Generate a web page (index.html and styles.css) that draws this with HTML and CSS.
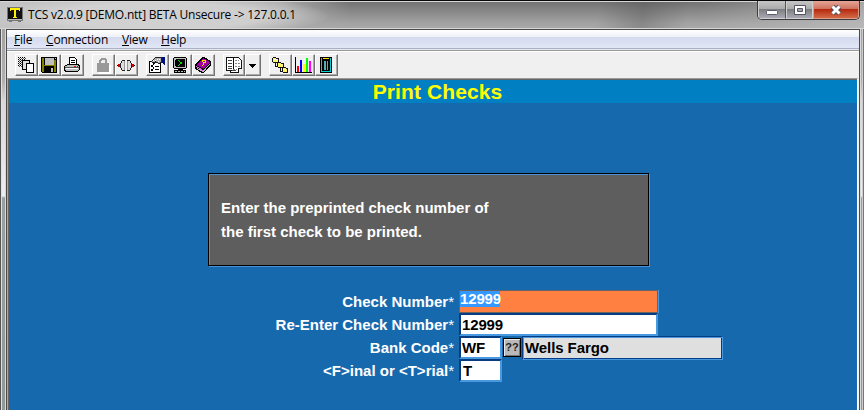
FILE: index.html
```html
<!DOCTYPE html>
<html lang="en">
<head>
<meta charset="utf-8">
<title>TCS v2.0.9</title>
<link rel="stylesheet" href="styles.css">
</head>
<body>
<div class="window">
  <header class="titlebar">
    <svg class="app-icon" width="16" height="16" viewBox="0 0 16 16" shape-rendering="crispEdges"><path fill="#777" d="M0 0h16v14H0zM2 14h3v1H2zM11 14h3v1h-3z"/><path fill="#111" d="M1 1h14v11H1z"/><path fill="#bbb" d="M1 12h14v1H1z"/><path fill="#ffef00" d="M3 1h10v3h-1V3H9v7h1v1H6v-1h1V3H4v1H3z"/></svg>
    <span class="caption">TCS v2.0.9 [DEMO.ntt] BETA Unsecure -&gt; 127.0.0.1</span>
    <div class="controls">
      <span class="ctl min"><svg width="14" height="12"><rect x="1.5" y="6.5" width="11" height="4" rx="1" fill="#fff" stroke="#5c5c6c"/></svg></span>
      <span class="ctl max"><svg width="14" height="12"><path d="M1.5 1.5h11v9h-11z" fill="#fff" stroke="#555566"/><path d="M4.500 4.500h5v3h-5z" fill="#a5a3a8" stroke="#555566"/></svg></span>
      <span class="ctl close"><svg width="14" height="12"><path d="M3.500 2.500L10.500 9.500M10.500 2.500L3.500 9.500" stroke="#585060" stroke-width="5"/><path d="M3.500 2.500L10.500 9.500M10.500 2.500L3.500 9.500" stroke="#fff" stroke-width="3"/></svg></span>
    </div>
  </header>
  <div class="client">
    <nav class="menu">
      <span class="m-file"><u>F</u>ile</span>
      <span class="m-conn"><u>C</u>onnection</span>
      <span class="m-view"><u>V</u>iew</span>
      <span class="m-help"><u>H</u>elp</span>
    </nav>
    <div class="toolbar">
      <div class="group">
        <span class="tool"><svg viewBox="0 0 18 18"><path d="M1 1.500h8M1 3.500h8M1 5.500h4M1 7.500h4M1 9.500h4" stroke="#000" stroke-dasharray="1 1"/><path d="M2 2.500h8M2 4.500h3M2 6.500h3M2 8.500h3M2 10.500h3" stroke="#555" stroke-dasharray="1 1"/><path d="M5.500 4.500h7v9h-7z" fill="#ddd" stroke="#000"/><path d="M9.500 7.500h7v9h-7z" fill="#fff" stroke="#000"/></svg></span>
        <span class="tool"><svg viewBox="0 0 18 18"><path fill="#000" d="M1 1h16v16H2l-1-1z"/><path fill="#808000" d="M2 2h2v14H2zM14 4h2v12h-2zM4 9h10v1H4z"/><path fill="#c0c0c0" d="M5 2h9v7H5zM15 2h1v1h-1zM11 12h2v4h-2z"/></svg></span>
        <span class="tool"><svg viewBox="0 0 18 18"><path d="M6.500 8.500v-7h5l2 2v5" fill="#fff" stroke="#000"/><path d="M8 4.500h4M8 6.500h4" stroke="#000"/><path d="M4.500 8.500h11l1 2v3l-2 2h-12l-1-2v-3z" fill="#c0c0c0" stroke="#000"/><path d="M2 11.500h14" stroke="#555"/><path d="M3 12.500h12" stroke="#fff"/><path d="M11 10.500h2M14 10.500h1" stroke="#f00"/></svg></span>
      </div>
      <div class="group">
        <span class="tool"><svg viewBox="0 0 18 18"><path fill="#fff" d="M5 9h12v9H5z"/><path fill="#999" d="M3 7h2V4l2-2h4l2 2v3h2v9H3z"/><path fill="#eee" d="M7 7V5l1-1h2l1 1v2z"/></svg></span>
        <span class="tool"><svg viewBox="0 0 18 18"><path fill="#d00000" d="M1 8h3v3H1zM14 8h3v3h-3z"/><path fill="#000" d="M0 9h1v1H0zM17 9h1v1h-1z"/><path d="M3.500 7.500l2-3h2v10h-2l-2-3zM14.500 7.500l-2-3h-2v10h2l2-3z" fill="#ddd" stroke="#222"/><path d="M7.500 5v9M10.500 5v9" stroke="#999"/></svg></span>
      </div>
      <div class="group">
        <span class="tool"><svg viewBox="0 0 18 18"><path d="M1.500 5.500h11v11h-11z" fill="#fff" stroke="#000"/><path d="M3 9.500l1 1 2-3M3 13.500l1 1 2-3M7 10.500h4M7 13.500h4" fill="none" stroke="#000"/><path d="M3.500 5.500l4-4h6v5l-3 1-3-2-1 2z" fill="#b0b0b0" stroke="#222"/><path d="M5 4h3M9 3h3M10 5h2" stroke="#fff" stroke-dasharray="1 1"/><path fill="#001080" d="M14 1h3v8h-1l-2-2z"/></svg></span>
        <span class="tool"><svg viewBox="0 0 18 18"><path d="M2.500 2.500l1-1h11l1 1v9l-1 1h-11l-1-1z" fill="#c0c0c0" stroke="#000"/><path fill="#000" d="M5 3h8l1 1v6l-1 1H5l-1-1V4zM7 13h5v2H7zM3 14h12v3H3z"/><path d="M4 15.500h10" stroke="#bbb" stroke-dasharray="2 1"/><path d="M7.500 4.500l3 2.500-3 2.500" fill="none" stroke="#00e000"/></svg></span>
        <span class="tool"><svg viewBox="0 0 18 18"><path fill="#000" d="M8 1h2l7 4v4l-7 8H8L1 13V9z"/><path fill="#a000a0" d="M9 2l7 4-6 7-8-4z"/><path d="M2 10.500l7 4" stroke="#f060f0" fill="none"/><path d="M3 12.500l6 3L16 8" stroke="#bbb" fill="none"/><path d="M7.500 5.500h1v-1h3v2h-2v2M8 9.500h1" stroke="#ffe000" fill="none"/></svg></span>
      </div>
      <div class="group">
        <span class="tool docs"><svg viewBox="0 0 18 18"><path d="M1.500 1.500h7v13h-7zM8.500 1.500h5l3 3v8h-3v4h-8v-2" fill="#fff" stroke="#111"/><path d="M3 4.500h4M3 7.500h4M3 10.500h4M3 12.500h4M7 14.500h4" stroke="#444"/><path d="M10 4.500h4M10 7.500h5M10 10.500h5M8 13.500h4" stroke="#888" stroke-dasharray="2 1"/></svg></span>
        <span class="tool drop"><svg viewBox="0 0 18 18"><path fill="#000" d="M5 8h7v1H5zM6 9h5v1H6zM7 10h3v1H7zM8 11h1v1H8z"/></svg></span>
      </div>
      <div class="group">
        <span class="tool"><svg viewBox="0 0 18 18"><path d="M1.500 2.500l1-1h2l1 1h2v4h-5l-1-1zM6.500 7.500l1-1h2l1 1h2v4h-5l-1-1zM11.500 12.500l1-1h2l1 1h1v4h-4l-1-1z" fill="#fff36a" stroke="#111"/><path d="M4.500 7v3h2M9.500 12v3h2" stroke="#111" fill="none"/><path d="M3 3.500h4M8 8.500h4M12 13.500h4" stroke="#fff" stroke-dasharray="1 1"/></svg></span>
        <span class="tool"><svg viewBox="0 0 18 18"><path d="M1.500 1v15.500H18" stroke="#000" fill="none"/><path fill="red" d="M3 10h2v6H3z"/><path fill="#00f" d="M6 4h2v12H6z"/><path fill="#ff0" d="M9 8h2v8H9z"/><path fill="#0f0" d="M12 2h2v14h-2z"/><path fill="#f0f" d="M15 5h2v11h-2z"/></svg></span>
        <span class="tool"><svg viewBox="0 0 18 18"><path fill="#000" d="M3 1h12v16H3z"/><path fill="#00d0d8" d="M4 2h1v14H4zM13 2h1v14h-1zM5 15h8v1H5z"/><path fill="#50b0b4" d="M6 4h6v10H6z"/><path d="M6 2.500h6" stroke="#ffe000"/><path d="M6 4.500h5.500V14M6.500 5v9M9.500 5v9" stroke="#000" fill="none"/></svg></span>
      </div>
    </div>
    <main class="screen">
      <h1><span>Print Checks</span></h1>
      <section class="message"><div class="message-inner">Enter the preprinted check number of<br>the first check to be printed.</div></section>
      <form class="fields">
        <div class="row"><label>Check Number<i>*</i></label><div class="field active"><mark>12999</mark></div></div>
        <div class="row"><label>Re-Enter Check Number<i>*</i></label><div class="field wide">12999</div></div>
        <div class="row"><label>Bank Code<i>*</i></label><div class="field code">WF</div><button type="button">??</button><div class="bank">Wells Fargo</div></div>
        <div class="row"><label>&lt;F&gt;inal or &lt;T&gt;rial<i>*</i></label><div class="field code trial">T</div></div>
      </form>
    </main>
  </div>
</div>
</body>
</html>
```
FILE: styles.css
```css
* { box-sizing: border-box; }
body { margin: 0; width: 864px; height: 410px; overflow: hidden; background: #999; }
.window {
  width: 864px; height: 410px; display: flex; flex-direction: column;
  padding: 0 4px 0 7px; border-top: 1px solid #08080c;
  background:
    linear-gradient(90deg, #555 0 1px, #e0e0e0 1px 2px, transparent 2px 862px, #ccc 862px 863px, #777 863px),
    linear-gradient(#9a9a9a, #b0b0b0 80px, #d8d8d8 100px, #eee 195px, #999f9e 197px, #929896);
}
.titlebar {
  flex: none; height: 28px; display: flex; align-items: flex-start; margin: 0 -4px 0 -7px; padding-left: 7px;
  border-top: 1px solid #d8d8d8; border-bottom: 1px solid #d6d6d6;
  background:
    radial-gradient(ellipse 170px 22px at 160px 14px, rgba(215,215,215,.8) 60%, transparent),
    linear-gradient(100deg, transparent 590px, rgba(70,70,70,.3) 635px, transparent 680px),
    linear-gradient(90deg, #c4c4c4 0, #aaa 280px, transparent 350px, transparent 700px, rgba(190,190,190,.7) 864px),
    linear-gradient(#737373, #a2a2a2 80%, #a8a8a8);
}
.app-icon { margin-top: 5px; }
.caption { font: 12px/26px "Open Sans", sans-serif; letter-spacing: -.21px; color: #000; margin-left: 5px; white-space: nowrap; }
.controls { display: flex; margin: -1px 4px 0 auto; height: 19px; width: 103px; border: 1px solid #3c3c40; border-top: 0; border-radius: 0 0 5px 5px; overflow: hidden; }
.ctl { display: flex; justify-content: center; align-items: center; border: 1px solid #d0d0d0; border-top: 0; background: linear-gradient(#c6c6c6, #aaa 48%, #7e7e80 50%, #a9a9b5); }
.min { width: 28px; border-right-color: #555; }
.max { width: 27px; }
.close { width: 46px; border-color: #e19a8a; background: linear-gradient(#e4a596, #cf705c 48%, #b72a11 50%, #d16b45); }
.client { flex: 1; width: 853px; border: solid #4a4a4a; border-width: 1px 1px 0 0; box-shadow: -1px 0 #4a4a4a, -2px 0 #d8d8d8, 1px 0 #d8d8d8; background: #f0f0f0; }
.menu { display: flex; height: 20px; padding-left: 7px; background: linear-gradient(#fff 0, #eef1f8 7px, #d5dbee 7px, #e0e6f5 18px, #aab1c4 18px, #aab1c4 19px, #e6e9f0 19px); font: 12px/19px "Open Sans", sans-serif; letter-spacing: -.18px; color: #000; }
.menu u { text-underline-offset: 1px; }
.m-file { width: 32px; }
.m-conn { width: 76px; }
.m-view { width: 39px; }
.toolbar { display: flex; gap: 8px; height: 28px; padding: 3px 0 0 8px; border-top: 1px solid #999; box-shadow: inset 0 1px #fff; background: #f0f0f0; }
.group { display: flex; }
.tool { width: 23px; height: 22px; padding: 1px; border: 1px solid; border-color: #fff #747474 #747474 #fff; box-shadow: inset -1px -1px #aaa; }
.tool svg { display: block; width: 18px; height: 18px; shape-rendering: crispEdges; }
.docs { width: 22px; }
.drop { width: 16px; padding: 1px 0; }
.drop svg { margin-left: -2px; }
.screen { height: 332px; width: 851px; border: solid #aaa; border-width: 1px 1px 0 1px; border-top-color: #999; border-right-color: #fff; padding: 1px 0 0 1px; background: linear-gradient(#666, #666) 0 0 / 100% 1px no-repeat, linear-gradient(#666, #666) 0 0 / 1px 100% no-repeat, #1769ae; font-family: "Liberation Sans", Arial, sans-serif; font-weight: 700; }
h1 { margin: 0; height: 23px; padding: 0 0 0 9px; background: #0080c3; color: #ff0; font-size: 21px; line-height: 24px; text-align: center; letter-spacing: .1px; }
.message { width: 441px; height: 93px; margin: 70px 0 0 199px; border: 1px solid #000; box-shadow: 1px 1px #4a92d5; }
.message-inner { height: 91px; border: solid #4a92d5; border-width: 1px 0 0 1px; background: #5e5e5e; color: #fff; font-size: 15px; line-height: 24px; padding: 21px 0 0 11px; }
.fields { margin: 24px 0 0; }
.row { display: flex; height: 23px; }
label { width: 445px; margin-right: 5px; text-align: right; color: #fff; font-size: 15px; line-height: 23px; }
label i { font-style: normal; font-weight: 400; }
.field { width: 199px; height: 23px; border: 2px solid; border-color: #083c80 #4899e2 #4899e2 #083c80; background: #fff; color: #000; font-size: 15px; letter-spacing: -.15px; line-height: 20px; padding-left: 1px; }
.active { border: 1px solid #6a6460; background: #ff8040; padding: 0; box-shadow: 1px 0 #4899e2; }
mark { display: block; width: 40px; height: 16px; background: #3399ff; color: #fff; line-height: 16px; }
.code { width: 43px; }
.trial { padding-left: 2px; }
button { width: 18px; height: 19px; margin: 2px 1px 0; padding: 0; border: 1px solid #000; background: #b9b9b9; box-shadow: inset 1px 1px #e8e8e8, inset -1px -1px #777; color: #222; font: bold 11px/17px "Liberation Sans", Arial, sans-serif; }
.bank { width: 201px; height: 24px; border: 1px solid; border-color: #083c80 #4899e2 #4899e2 #083c80; box-shadow: inset 1px 1px #4899e2, inset -1px -1px #083c80; background: #dfdfdf; color: #000; font-size: 15px; letter-spacing: -.08px; line-height: 21px; padding-left: 2px; }
```
